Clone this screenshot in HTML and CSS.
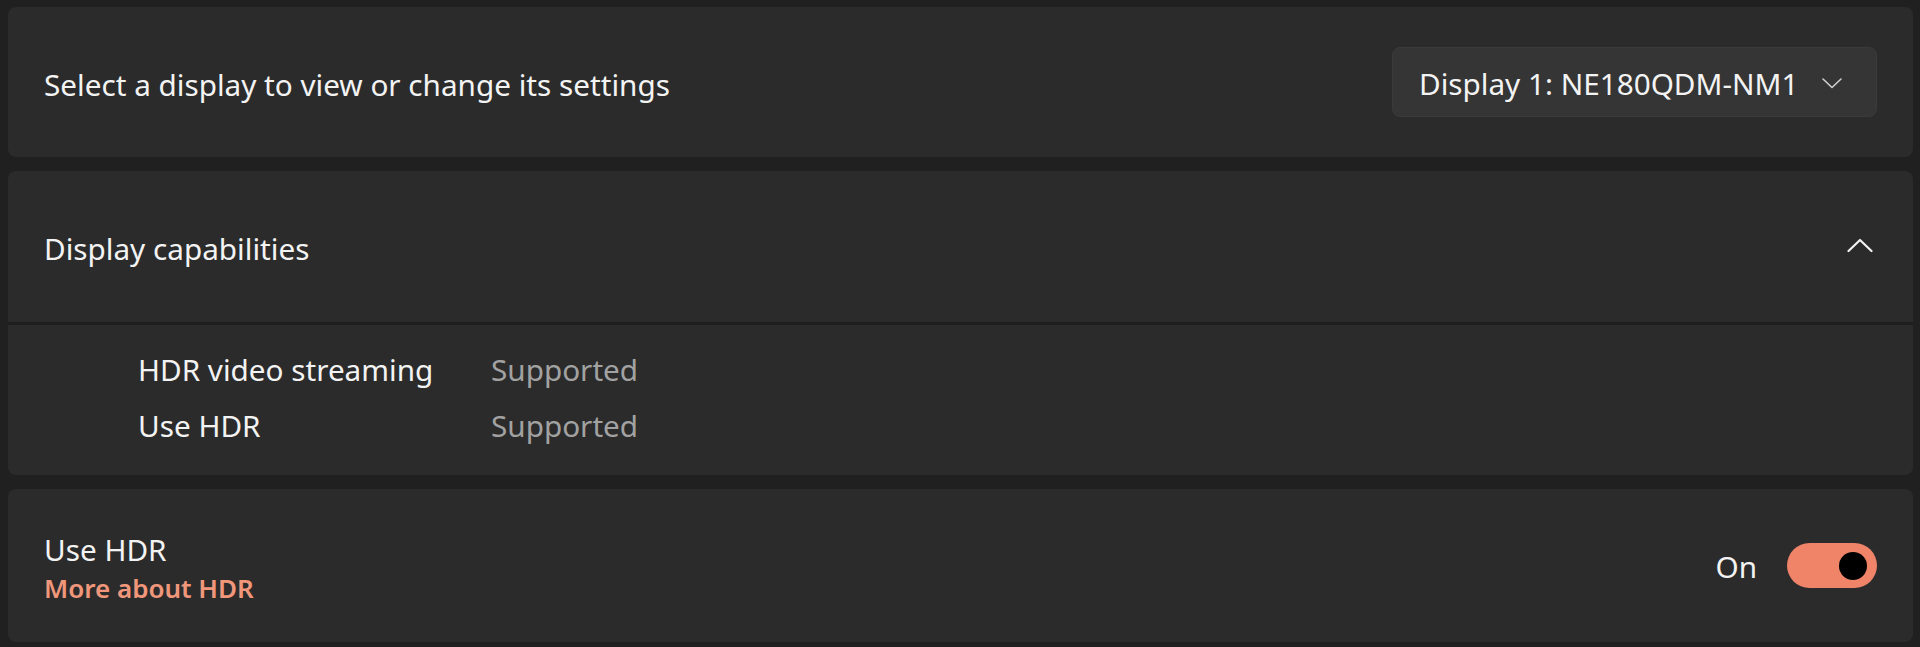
FILE: index.html
```html
<!DOCTYPE html>
<html lang="en">

<head>
    <meta charset="UTF-8">
    <meta name="viewport" content="width=device-width, initial-scale=1.0">
    <title> Display settings </title>

    <link rel="stylesheet" href="styles.css">
</head>

<body>
    <div id="wrap">
        <!-- display picker -->
        <div class="card card_select">
            <p class="card_title">Select a display to view or change its settings</p>
            <div class="dropdown">
                <span>Display 1: NE180QDM-NM1</span>
                <svg class="chev_down" width="20" height="11" viewBox="0 0 20 11">
                    <path d="M1 1 L10 9.5 L19 1" fill="none" stroke="#d0d0d0" stroke-width="1.6" stroke-linecap="round" stroke-linejoin="round" />
                </svg>
            </div>
        </div>

        <!-- capabilities (expanded) -->
        <div class="card card_expand">
            <div class="expand_head">
                <p class="card_title">Display capabilities</p>
                <svg class="chev_up" width="26" height="15" viewBox="0 0 26 15">
                    <path d="M1.5 13 L13 2 L24.5 13" fill="none" stroke="#f2f2f2" stroke-width="2.2" stroke-linecap="round" stroke-linejoin="round" />
                </svg>
            </div>
            <div class="expand_body">
                <ul class="cap_list">
                    <li><span class="cap_name">HDR video streaming</span><span class="cap_val">Supported</span></li>
                    <li><span class="cap_name">Use HDR</span><span class="cap_val">Supported</span></li>
                </ul>
            </div>
        </div>

        <!-- HDR toggle -->
        <div class="card card_toggle">
            <div class="toggle_text">
                <p class="card_title">Use HDR</p>
                <a href="#" class="link">More about HDR</a>
            </div>
            <div class="toggle_wrap">
                <span class="toggle_state">On</span>
                <span class="toggle on"><span class="thumb"></span></span>
            </div>
        </div>
    </div>
</body>

</html>
```

FILE: styles.css
```css
* {
    margin: 0;
    padding: 0;
    box-sizing: border-box;
}

ul li {
    list-style: none;
}

a {
    text-decoration: none;
}

body {
    background-color: #202020;
    font-family: "Noto Sans", "Open Sans", sans-serif;
    font-size: 29.7px;
    color: #f3f3f3;
}

#wrap {
    padding: 7px 7px 0 8px;
    display: flex;
    flex-direction: column;
}

.card {
    background-color: #2b2b2b;
    border-radius: 8px;
}

.card_title {
    color: #f3f3f3;
    line-height: 38px;
}

/* card 1 */
.card_select {
    height: 150px;
    display: flex;
    align-items: center;
    justify-content: space-between;
    padding: 0 36px 0 36px;
}

.card_select .card_title {
    padding-top: 6px;
}

.dropdown {
    width: 485px;
    height: 70px;
    background-color: #353535;
    border: 1px solid #3a3a3a;
    border-radius: 8px;
    display: flex;
    align-items: center;
    justify-content: space-between;
    padding: 2px 34px 0 26px;
}

.dropdown span {
    color: #f3f3f3;
}

/* card 2 */
.card_expand {
    margin-top: 14px;
}

.expand_head {
    height: 154px;
    display: flex;
    align-items: center;
    justify-content: space-between;
    padding: 0 40px 3px 36px;
    border-bottom: 3px solid #1e1e1e;
}

.expand_head .card_title {
    padding-top: 7px;
}

.expand_body {
    height: 150px;
    padding: 16px 0 0 130px;
}

.cap_list li {
    display: flex;
    height: 56px;
    align-items: center;
}

.cap_name {
    width: 353px;
}

.cap_val {
    color: #a2a2a2;
}

/* card 3 */
.card_toggle {
    margin-top: 14px;
    height: 153px;
    display: flex;
    align-items: center;
    justify-content: space-between;
    padding: 0 36px 0 36px;
}

.toggle_text {
    display: flex;
    flex-direction: column;
    padding-top: 5px;
}

.link {
    color: #f0977b;
    font-size: 26px;
    line-height: 34px;
    font-weight: 600;
    margin-top: 2px;
}

.toggle_wrap {
    display: flex;
    align-items: center;
}

.toggle_state {
    margin-right: 30px;
    padding-top: 2px;
}

.toggle {
    width: 90px;
    height: 45px;
    border-radius: 23px;
    background-color: #ef8468;
    display: flex;
    align-items: center;
    justify-content: flex-end;
    padding-right: 10px;
}

.toggle .thumb {
    width: 28px;
    height: 28px;
    border-radius: 50%;
    background-color: #000;
}
```
